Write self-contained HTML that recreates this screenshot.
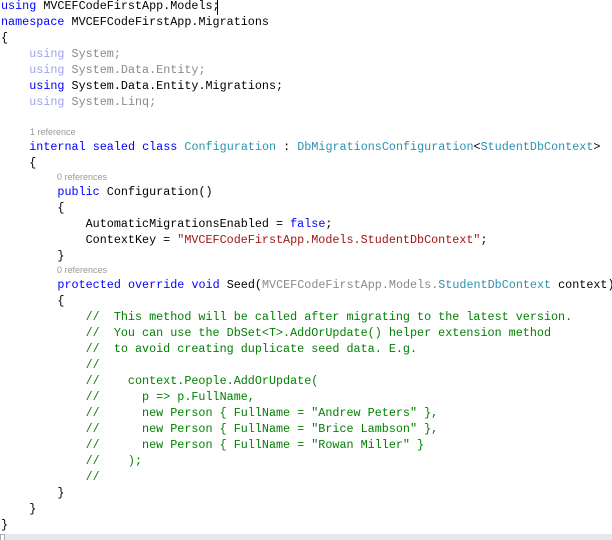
<!DOCTYPE html>
<html><head><meta charset="utf-8"><style>
html,body{margin:0;padding:0;background:#fff;width:612px;height:540px;overflow:hidden;position:relative}
.l{position:absolute;left:1px;height:16px;line-height:16px;white-space:pre;font-family:"Liberation Mono",monospace;font-size:11.75px;color:#000}
.c{position:absolute;white-space:pre;font-family:"Liberation Sans",sans-serif;font-size:9px;color:#999;line-height:11px}
.k{color:#0000ff}.t{color:#2b91af}.s{color:#a31515}.g{color:#008000}.gk{color:#9f9ff7}.gn{color:#8a8a8a}.gt{color:#62b0c8}
</style></head><body>
<div class="l" style="top:-2px"><span class="k">using</span> MVCEFCodeFirstApp.Models;</div>
<div style="position:absolute;left:217px;top:0;width:1px;height:15px;background:#000"></div>
<div class="l" style="top:14px"><span class="k">namespace</span> MVCEFCodeFirstApp.Migrations</div>
<div class="l" style="top:30px">{</div>
<div class="l" style="top:46px">    <span class="gk">using</span> <span class="gn">System;</span></div>
<div class="l" style="top:62px">    <span class="gk">using</span> <span class="gn">System.Data.Entity;</span></div>
<div class="l" style="top:78px">    <span class="k">using</span> System.Data.Entity.Migrations;</div>
<div class="l" style="top:94px">    <span class="gk">using</span> <span class="gn">System.Linq;</span></div>
<div class="c" style="left:30px;top:127px">1 reference</div>
<div class="l" style="top:139px">    <span class="k">internal</span> <span class="k">sealed</span> <span class="k">class</span> <span class="t">Configuration</span> : <span class="t">DbMigrationsConfiguration</span>&lt;<span class="t">StudentDbContext</span>&gt;</div>
<div class="l" style="top:155px">    {</div>
<div class="c" style="left:57px;top:172px">0 references</div>
<div class="l" style="top:184px">        <span class="k">public</span> Configuration()</div>
<div class="l" style="top:200px">        {</div>
<div class="l" style="top:216px">            AutomaticMigrationsEnabled = <span class="k">false</span>;</div>
<div class="l" style="top:232px">            ContextKey = <span class="s">"MVCEFCodeFirstApp.Models.StudentDbContext"</span>;</div>
<div class="l" style="top:248px">        }</div>
<div class="c" style="left:57px;top:265px">0 references</div>
<div class="l" style="top:277px">        <span class="k">protected</span> <span class="k">override</span> <span class="k">void</span> Seed(<span class="gn">MVCEFCodeFirstApp.Models.</span><span class="t">StudentDbContext</span> context)</div>
<div class="l" style="top:293px">        {</div>
<div class="l g" style="top:309px">            //  This method will be called after migrating to the latest version.</div>
<div class="l g" style="top:325px">            //  You can use the DbSet&lt;T&gt;.AddOrUpdate() helper extension method</div>
<div class="l g" style="top:341px">            //  to avoid creating duplicate seed data. E.g.</div>
<div class="l g" style="top:357px">            //</div>
<div class="l g" style="top:373px">            //    context.People.AddOrUpdate(</div>
<div class="l g" style="top:389px">            //      p =&gt; p.FullName,</div>
<div class="l g" style="top:405px">            //      new Person { FullName = "Andrew Peters" },</div>
<div class="l g" style="top:421px">            //      new Person { FullName = "Brice Lambson" },</div>
<div class="l g" style="top:437px">            //      new Person { FullName = "Rowan Miller" }</div>
<div class="l g" style="top:453px">            //    );</div>
<div class="l g" style="top:469px">            //</div>
<div class="l" style="top:485px">        }</div>
<div class="l" style="top:501px">    }</div>
<div class="l" style="top:517px">}</div>
<div style="position:absolute;left:0;top:534px;width:612px;height:6px;background:#e8e8ec"></div>
<div style="position:absolute;left:0;top:534px;width:5px;height:6px;border:1px solid #aaa;border-bottom:none;box-sizing:border-box;background:#fff"></div>
</body></html>
